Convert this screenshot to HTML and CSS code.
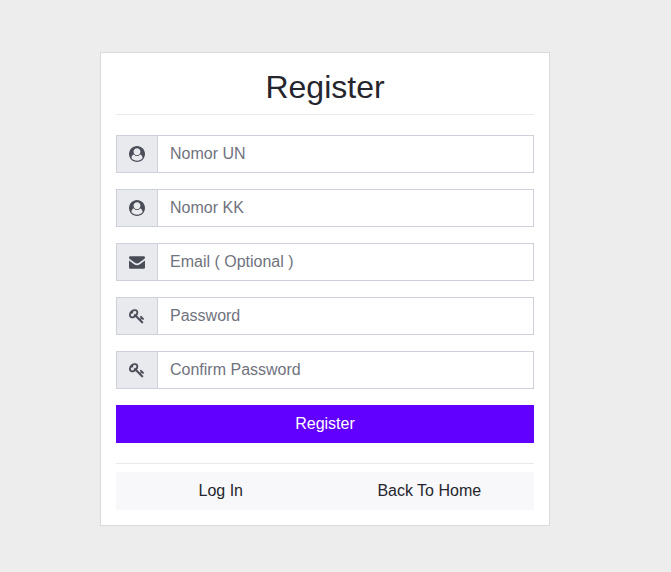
FILE: index.html
```html
<!DOCTYPE html>
<html lang="id">
<head>
<meta charset="utf-8">
<title>Register</title>
<link rel="stylesheet" href="styles.css">
</head>
<body>
<svg class="sprite" aria-hidden="true">
  <symbol id="user" viewBox="0 0 1792 1792"><path d="M1523 1339q-22-155-87.500-257.500t-184.500-118.500q-67 74-159.500 115.500t-195.500 41.500-195.500-41.500-159.500-115.500q-119 16-184.500 118.500t-87.500 257.500q106 150 271 237.500t356 87.500 356-87.500 271-237.500zm-243-699q0-159-112.500-271.500t-271.500-112.500-271.500 112.500-112.500 271.500 112.500 271.500 271.500 112.500 271.500-112.500 112.500-271.500zm512 256q0 182-71 347.500t-190.500 286-285.500 191.500-349 71q-182 0-348-71t-286-191-191-286-71-348 71-348 191-286 286-191 348-71 348 71 286 191 191 286 71 348z"/></symbol>
  <symbol id="mail" viewBox="0 0 1792 1792"><path d="M0 390Q0 256 145 256H1647Q1792 256 1792 390 1792 500 1670 600L1130 980Q900 1130 660 980L122 600Q0 500 0 390zM0 740L610 1170Q896 1340 1182 1170L1792 740V1504Q1792 1664 1632 1664H160Q0 1664 0 1504z"/></symbol>
  <symbol id="key" viewBox="0 0 1792 1792"><path d="M832 512q0-80-56-136t-136-56-136 56-56 136q0 42 19 83-41-19-83-19-80 0-136 56t-56 136 56 136 136 56 136-56 56-136q0-42-19-83 41 19 83 19 80 0 136-56t56-136zm851 704q0 17-49 66t-66 49q-9 0-28.500-16t-36.500-33-38.500-40-24.500-26l-96 96 220 220q28 28 28 68 0 42-39 81t-81 39q-40 0-68-28l-671-671q-176 131-365 131-163 0-265.500-102.500t-102.500-265.500q0-160 95-313t248-248 313-95q163 0 265.500 102.500t102.500 265.500q0 189-131 365l355 355 96-96q-3-3-26-24.500t-40-38.500-33-36.500-16-28.500q0-17 49-66t66-49q13 0 23 10 6 6 46 44.500t82 79.500 86.500 86 73 78 28.500 41z"/></symbol>
</svg>
<main class="card">
  <h2 class="title">Register</h2>
  <form class="form">
    <div class="group"><span class="addon"><svg class="icon"><use href="#user"/></svg></span><input class="input" type="text" placeholder="Nomor UN"></div>
    <div class="group"><span class="addon"><svg class="icon"><use href="#user"/></svg></span><input class="input" type="text" placeholder="Nomor KK"></div>
    <div class="group"><span class="addon"><svg class="icon"><use href="#mail"/></svg></span><input class="input" type="email" placeholder="Email ( Optional )"></div>
    <div class="group"><span class="addon"><svg class="icon icon-bold"><use href="#key"/></svg></span><input class="input" type="password" placeholder="Password"></div>
    <div class="group"><span class="addon"><svg class="icon icon-bold"><use href="#key"/></svg></span><input class="input" type="password" placeholder="Confirm Password"></div>
    <button class="submit" type="button">Register</button>
  </form>
  <nav class="links"><a class="link" href="#">Log In</a><a class="link" href="#">Back To Home</a></nav>
</main>
</body>
</html>
```

FILE: styles.css
```css
* { box-sizing: border-box; }
body {
  margin: 0;
  padding: 52px 0 46px 100px;
  background: #ededed;
  color: #25262d;
  font: 16px/24px "Liberation Sans", Arial, sans-serif;
}
.sprite { display: none; }
.card {
  width: 450px;
  height: 474px;
  padding: 15px;
  background: #fff;
  border: 1px solid #dadada;
}
.title {
  margin: 0 0 20px;
  height: 47px;
  border-bottom: 1px solid #e9e9e9;
  font-size: 32px;
  font-weight: 400;
  line-height: 38px;
  text-align: center;
}
.form { display: grid; gap: 16px; }
.group { display: flex; height: 38px; }
.addon {
  display: flex;
  align-items: center;
  width: 42px;
  padding-left: 12px;
  background: #e9eaee;
  border: 1px solid #ced0da;
}
.icon {
  width: 16px;
  height: 16px;
  fill: #4a4d58;
}
.icon-bold {
  stroke: #4a4d58;
  stroke-width: 20px;
}
.input {
  flex: 1;
  min-width: 0;
  margin-left: -1px;
  padding: 6px 12px;
  background: #fff;
  border: 1px solid #ced0da;
  border-radius: 0;
  font: inherit;
}
.input::placeholder { color: #70737e; opacity: 1; }
.submit {
  height: 38px;
  padding: 0;
  background: #6200ff;
  border: 0;
  color: #fff;
  font: inherit;
}
.links {
  display: flex;
  margin-top: 20px;
  padding-top: 8px;
  border-top: 1px solid #e9e9e9;
}
.link {
  flex: 1;
  height: 38px;
  background: #f8f8fa;
  color: #25262d;
  line-height: 38px;
  text-align: center;
  text-decoration: none;
}
.link + .link { margin-left: -1px; }
```
